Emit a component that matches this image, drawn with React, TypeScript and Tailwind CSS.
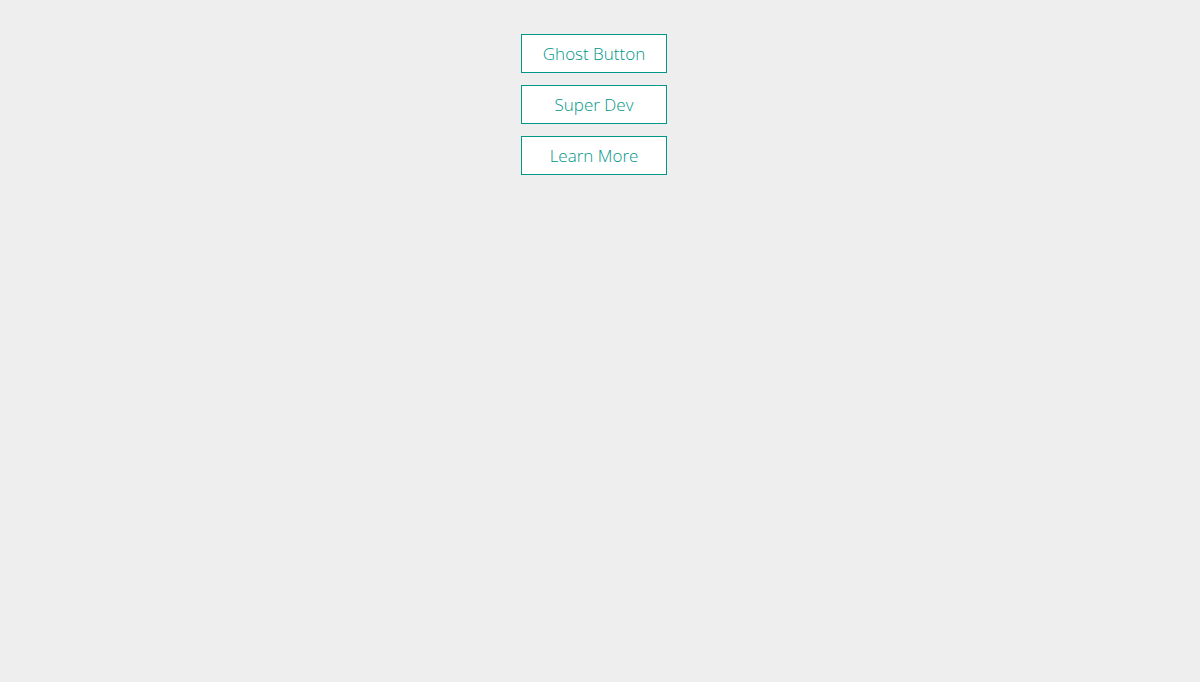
import React from "react";

const labels = ["Ghost Button", "Super Dev", "Learn More"];

export default function App() {
  return (
    <div className="min-h-screen w-full bg-[#eeeeee] pt-[34px] pl-[521px]" style={{ fontFamily: '"Open Sans", sans-serif' }}>
      <div className="flex flex-col items-start gap-[12px]">
        {labels.map((label) => (
          <button
            key={label}
            className="w-[146px] h-[39px] bg-white border border-[#009688] text-[#009688] text-[17px] font-light flex items-center justify-center cursor-pointer"
          >
            {label}
          </button>
        ))}
      </div>
    </div>
  );
}
